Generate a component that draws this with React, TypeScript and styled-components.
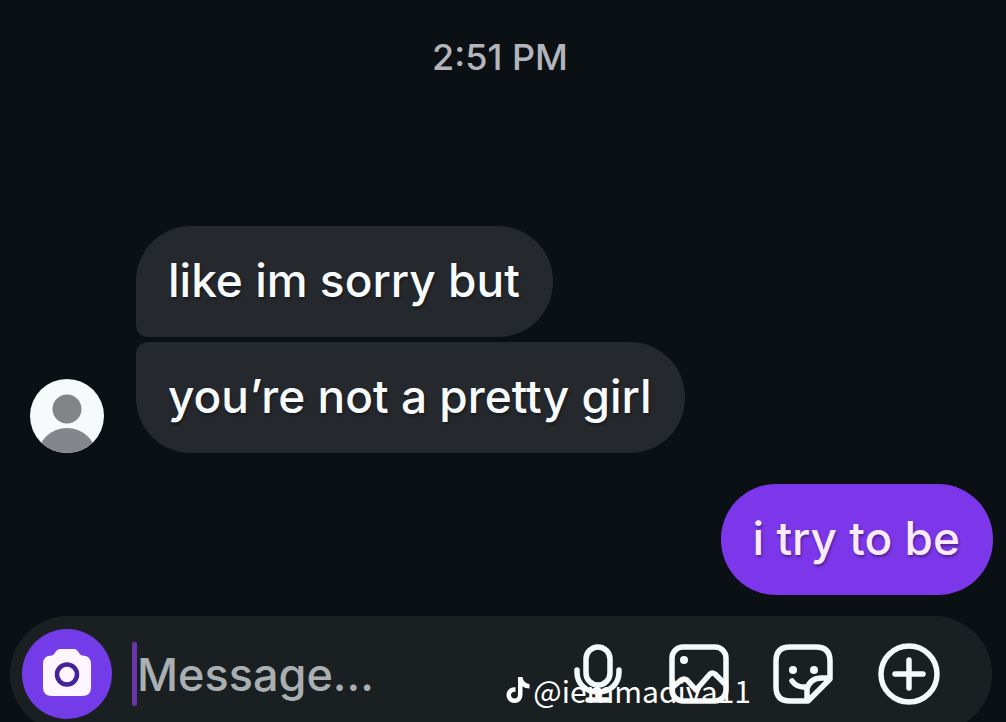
import React from "react";
import styled, { createGlobalStyle } from "styled-components";

const GlobalStyle = createGlobalStyle`
  * { box-sizing: border-box; }
  body {
    margin: 0;
    background: #0b1014;
    font-family: Inter, "Liberation Sans", sans-serif;
  }
`;

const Screen = styled.div`
  position: relative;
  display: flex;
  flex-direction: column;
  height: 100vh;
  overflow: hidden;
  background: #0b1014;
`;

const Timestamp = styled.time`
  padding: 36px 6px 0 0;
  text-align: center;
  font-size: 36px;
  line-height: 42px;
  font-weight: 500;
  color: #b4b5bc;
`;

const Thread = styled.main`
  display: flex;
  flex-direction: column;
  flex: none;
  gap: 31px;
  padding: 148px 13px 21px 30px;
`;

const IncomingGroup = styled.section`
  display: flex;
  align-items: flex-end;
  gap: 32px;
`;

const BubbleStack = styled.div`
  display: flex;
  flex-direction: column;
  align-items: flex-start;
  gap: 5px;
`;

const Bubble = styled.p<{ $kind: "first" | "last" | "own" }>`
  margin: 0;
  padding: 26px 33px 29px 32px;
  font-size: 46px;
  line-height: 56px;
  font-weight: 500;
  white-space: nowrap;
  color: ${(p) => (p.$kind === "own" ? "#fbeaff" : "#f8fbfd")};
  background: ${(p) => (p.$kind === "own" ? "#7c37ea" : "#25292e")};
  align-self: ${(p) => (p.$kind === "own" ? "flex-end" : "flex-start")};
  border-radius: ${(p) =>
    p.$kind === "first" ? "55px 55px 55px 12px" : p.$kind === "last" ? "12px 55px 55px 55px" : "55px"};
  text-shadow: 1px 2px 3px rgba(0, 0, 0, 0.4);
`;

const Avatar = styled.svg`
  flex: none;
  width: 74px;
  height: 74px;
`;

const Composer = styled.form`
  display: flex;
  align-items: center;
  flex: none;
  height: 116px;
  margin: 0 14px 0 10px;
  padding: 0 52px 0 12px;
  border-radius: 58px;
  background: #1a2022;
`;

const CameraButton = styled.button`
  display: grid;
  place-items: center;
  flex: none;
  width: 90px;
  height: 90px;
  padding: 0;
  border: 0;
  border-radius: 50%;
  background: #743be8;
`;

const Caret = styled.span`
  flex: none;
  width: 5px;
  height: 64px;
  margin-left: 20px;
  border-radius: 2px;
  background: #6a35a8;
`;

const MessageInput = styled.input`
  flex: 1;
  min-width: 0;
  height: 64px;
  padding: 0;
  border: 0;
  outline: 0;
  background: transparent;
  color: #f8fbfd;
  font-family: inherit;
  font-size: 45px;
  font-weight: 500;
  &::placeholder {
    color: #aab0b1;
    opacity: 1;
  }
`;

const Actions = styled.div`
  display: flex;
  align-items: center;
  gap: 42px;
`;

const IconButton = styled.button`
  display: block;
  width: 62px;
  height: 62px;
  padding: 0;
  border: 0;
  background: transparent;
  color: #f5f9fa;
  svg {
    display: block;
    overflow: visible;
    fill: none;
    stroke: currentColor;
    stroke-width: 5.5;
    stroke-linecap: round;
    stroke-linejoin: round;
  }
`;

const Watermark = styled.div`
  position: absolute;
  right: 255px;
  bottom: 10px;
  display: flex;
  align-items: center;
  gap: 3px;
  font-family: "Noto Sans CJK SC", sans-serif;
  font-size: 30px;
  line-height: 44px;
  color: #ffffff;
  pointer-events: none;
`;

export default function App() {
  return (
    <Screen>
      <GlobalStyle />
      <Timestamp>2:51 PM</Timestamp>
      <Thread>
        <IncomingGroup>
          <Avatar viewBox="0 0 74 74" aria-label="Profile photo">
            <clipPath id="face">
              <circle cx="37" cy="37" r="37" />
            </clipPath>
            <g clipPath="url(#face)">
              <rect width="74" height="74" fill="#f6fafb" />
              <circle cx="37" cy="30" r="14.5" fill="#818587" />
              <circle cx="37" cy="79" r="30" fill="#85868c" />
            </g>
          </Avatar>
          <BubbleStack>
            <Bubble $kind="first">like im sorry but</Bubble>
            <Bubble $kind="last">you’re not a pretty girl</Bubble>
          </BubbleStack>
        </IncomingGroup>
        <Bubble $kind="own">i try to be</Bubble>
      </Thread>
      <Composer onSubmit={(e) => e.preventDefault()}>
        <CameraButton type="button" aria-label="Camera">
          <svg width="50" height="50" viewBox="0 1 50 50">
            <path
              d="M10 7.500 C13 7 13.500 1 18 1 H32 C36.500 1 37 7 40 7.500 C46 7.500 49 10.500 49 16 V39 C49 45 46 48 40 48 H10 C4 48 1 45 1 39 V16 C1 10.500 4 7.500 10 7.500 Z"
              fill="#fdf5ff"
            />
            <circle cx="25" cy="26.500" r="10" fill="#fdf5ff" stroke="#45219a" strokeWidth="4.500" />
          </svg>
        </CameraButton>
        <Caret />
        <MessageInput type="text" aria-label="Message" placeholder="Message..." />
        <Actions>
          <IconButton type="button" aria-label="Voice message">
            <svg width="62" height="62" viewBox="-1 0 62 62">
              <rect x="19" y="4" width="24" height="38" rx="12" />
              <path d="M10 27 V29 C10 41 19 49 31 49 C43 49 52 41 52 29 V27 M31 49 V57 M21 57 H41" />
            </svg>
          </IconButton>
          <IconButton type="button" aria-label="Photo">
            <svg width="62" height="62" viewBox="2 0 62 62">
              <rect x="4" y="4" width="54" height="54" rx="11" />
              <circle cx="16" cy="17" r="4" fill="currentColor" stroke="none" />
              <path d="M5 44 L13 37 Q16 35 19 37 L28 47 L42 31 Q44 29 47 31 L57 41" />
            </svg>
          </IconButton>
          <IconButton type="button" aria-label="Sticker">
            <svg width="62" height="62" viewBox="2 0 62 62">
              <path d="M18 4 H44 Q58 4 58 18 V36 L36 58 H18 Q4 58 4 44 V18 Q4 4 18 4 Z M35 57 V46 Q38 35 50 35 H57" />
              <path d="M20 38 Q25 45 35 44" />
              <circle cx="21" cy="27" r="4" fill="currentColor" stroke="none" />
              <circle cx="42" cy="27" r="4" fill="currentColor" stroke="none" />
            </svg>
          </IconButton>
          <IconButton type="button" aria-label="More">
            <svg width="62" height="62" viewBox="0 0 62 62">
              <circle cx="31" cy="31" r="28" />
              <path d="M31 17 V45 M17 31 H45" />
            </svg>
          </IconButton>
        </Actions>
      </Composer>
      <Watermark>
        <svg width="24" height="28" viewBox="0 0 24 28" fill="#fff">
          <path d="M12 1 H16.500 C17 5 19.500 7.500 23.500 8 V12.500 C21 12.500 18.500 11.700 16.500 10.300 V18.500 C16.500 23.500 13 27 8.500 27 C4 27 0.500 23.500 0.500 19 C0.500 14 4.500 10.700 9.500 11.200 V15.800 C7 15.200 5 16.700 5 19 C5 21 6.500 22.500 8.500 22.500 C10.700 22.500 12 21 12 18.500 Z" />
        </svg>
        <span>@iemmadiva11</span>
      </Watermark>
    </Screen>
  );
}
